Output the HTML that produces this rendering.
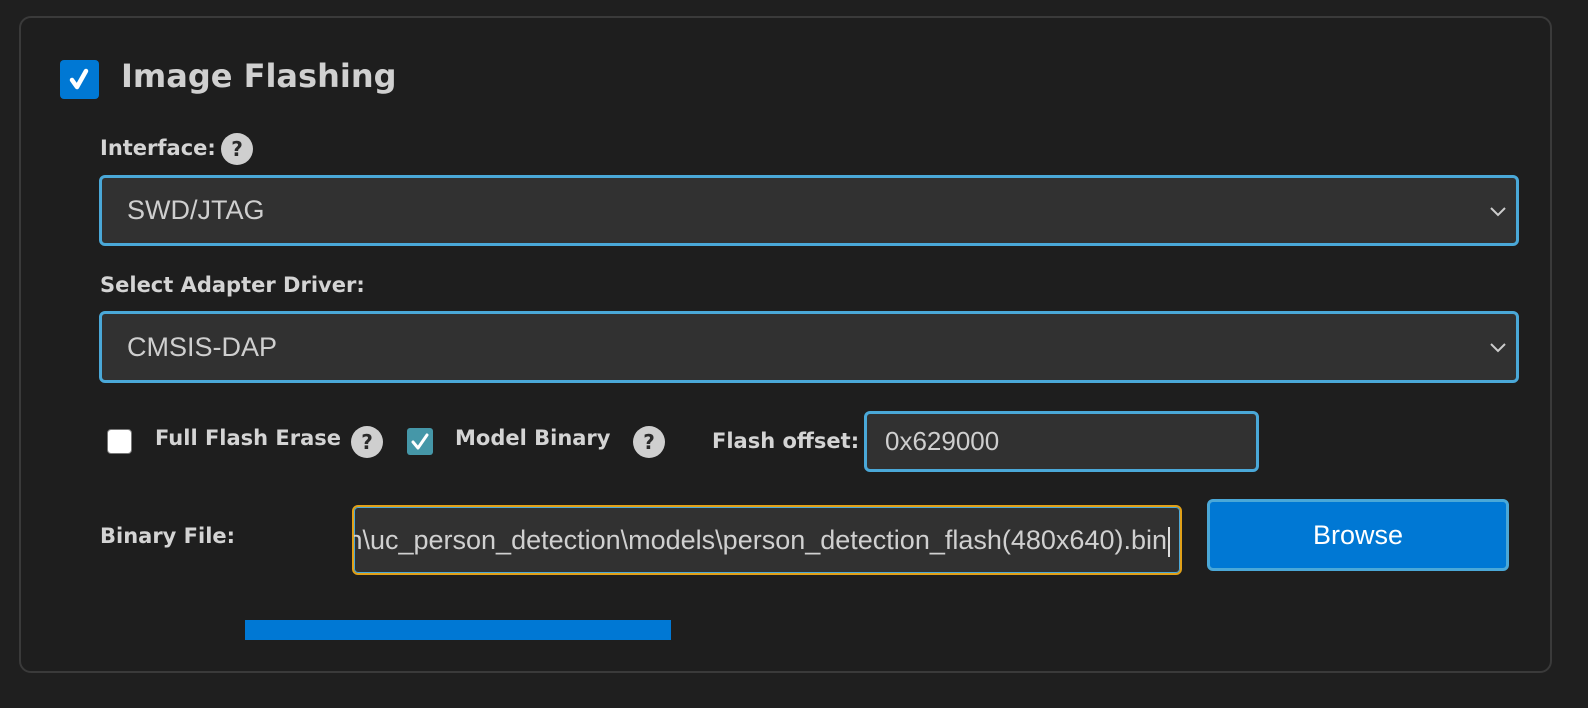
<!DOCTYPE html>
<html><head><meta charset="utf-8"><style>
*{box-sizing:border-box;margin:0;padding:0}
body{width:1588px;height:708px;background:#1f1f1f;font-family:"Liberation Sans",sans-serif;position:relative;overflow:hidden}
.a{position:absolute}
.panel{left:19px;top:16px;width:1533px;height:657px;border:2px solid #3a3a3a;border-radius:12px;background:#1e1e1e}
.lbl{font-family:"DejaVu Sans","Liberation Sans",sans-serif;font-weight:bold;color:#d4d4d4;font-size:21px;line-height:25px;white-space:nowrap}
.sel{border:3px solid #4aa8d8;border-radius:6px;background:#313131;color:#cfcfcf;font-size:27px;padding-left:25px;display:flex;align-items:center}
.q{width:32px;height:32px;border-radius:50%;background:#cfcfcf;color:#2a2a2a;font-family:"DejaVu Sans",sans-serif;font-weight:bold;font-size:20px;text-align:center;line-height:32px}
.chev{position:absolute;right:8px;top:50%;margin-top:-8px}
</style></head><body>
<div class="a panel"></div>
<div class="a" style="left:60px;top:60px;width:39px;height:39px;background:#0078d4;border-radius:4px"></div>
<svg class="a" style="left:60px;top:60px" width="39" height="39"><path d="M12 20 L17 27 L26 11" stroke="#fff" stroke-width="4.5" fill="none" stroke-linecap="round" stroke-linejoin="round"/></svg>
<div class="a lbl" style="left:121px;top:57px;font-size:32px;line-height:38px;color:#d0d0d0">Image Flashing</div>

<div class="a lbl" style="left:100px;top:136px">Interface:</div>
<div class="a q" style="left:221px;top:133px">?</div>
<div class="a sel" style="left:99px;top:175px;width:1420px;height:71px">SWD/JTAG<svg class="chev" width="20" height="16"><path d="M3 5 L10 12 L17 5" stroke="#ccc" stroke-width="2" fill="none"/></svg></div>

<div class="a lbl" style="left:100px;top:273px">Select Adapter Driver:</div>
<div class="a sel" style="left:99px;top:311px;width:1420px;height:72px">CMSIS-DAP<svg class="chev" width="20" height="16"><path d="M3 5 L10 12 L17 5" stroke="#ccc" stroke-width="2" fill="none"/></svg></div>

<div class="a" style="left:107px;top:429px;width:25px;height:25px;background:#fff;border:1px solid #777;border-radius:4px"></div>
<div class="a lbl" style="left:155px;top:426px">Full Flash Erase</div>
<div class="a q" style="left:351px;top:426px">?</div>
<div class="a" style="left:407px;top:428px;width:26px;height:27px;background:#4597a8;border-radius:3px"></div>
<svg class="a" style="left:407px;top:428px" width="26" height="27"><path d="M6 14 L11 20 L20 7" stroke="#fff" stroke-width="3" fill="none" stroke-linecap="round" stroke-linejoin="round"/></svg>
<div class="a lbl" style="left:455px;top:426px">Model Binary</div>
<div class="a q" style="left:633px;top:426px">?</div>
<div class="a lbl" style="left:712px;top:429px">Flash offset:</div>
<div class="a sel" style="left:864px;top:411px;width:395px;height:61px;padding-left:18px;font-size:26px">0x629000</div>

<div class="a lbl" style="left:100px;top:524px">Binary File:</div>
<div class="a" style="left:352px;top:505px;width:830px;height:70px;border:2px solid #e0a018;border-radius:6px;box-shadow:inset 0 0 0 1px #4aa8d8;background:#313131;overflow:hidden">
<div style="position:absolute;right:10px;top:0;height:66px;line-height:66px;white-space:nowrap;color:#d0d0d0;font-size:27px">detection\uc_person_detection\models\person_detection_flash(480x640).bin<span style="display:inline-block;width:2px;height:30px;background:#ddd;vertical-align:middle;margin-left:1px"></span></div></div>
<div class="a" style="left:1207px;top:499px;width:302px;height:72px;background:#0078d4;border:3px solid #4aa8d8;border-radius:6px;color:#fff;font-size:27px;text-align:center;line-height:66px">Browse</div>
<div class="a" style="left:245px;top:620px;width:426px;height:20px;background:#0078d4"></div>
</body></html>
